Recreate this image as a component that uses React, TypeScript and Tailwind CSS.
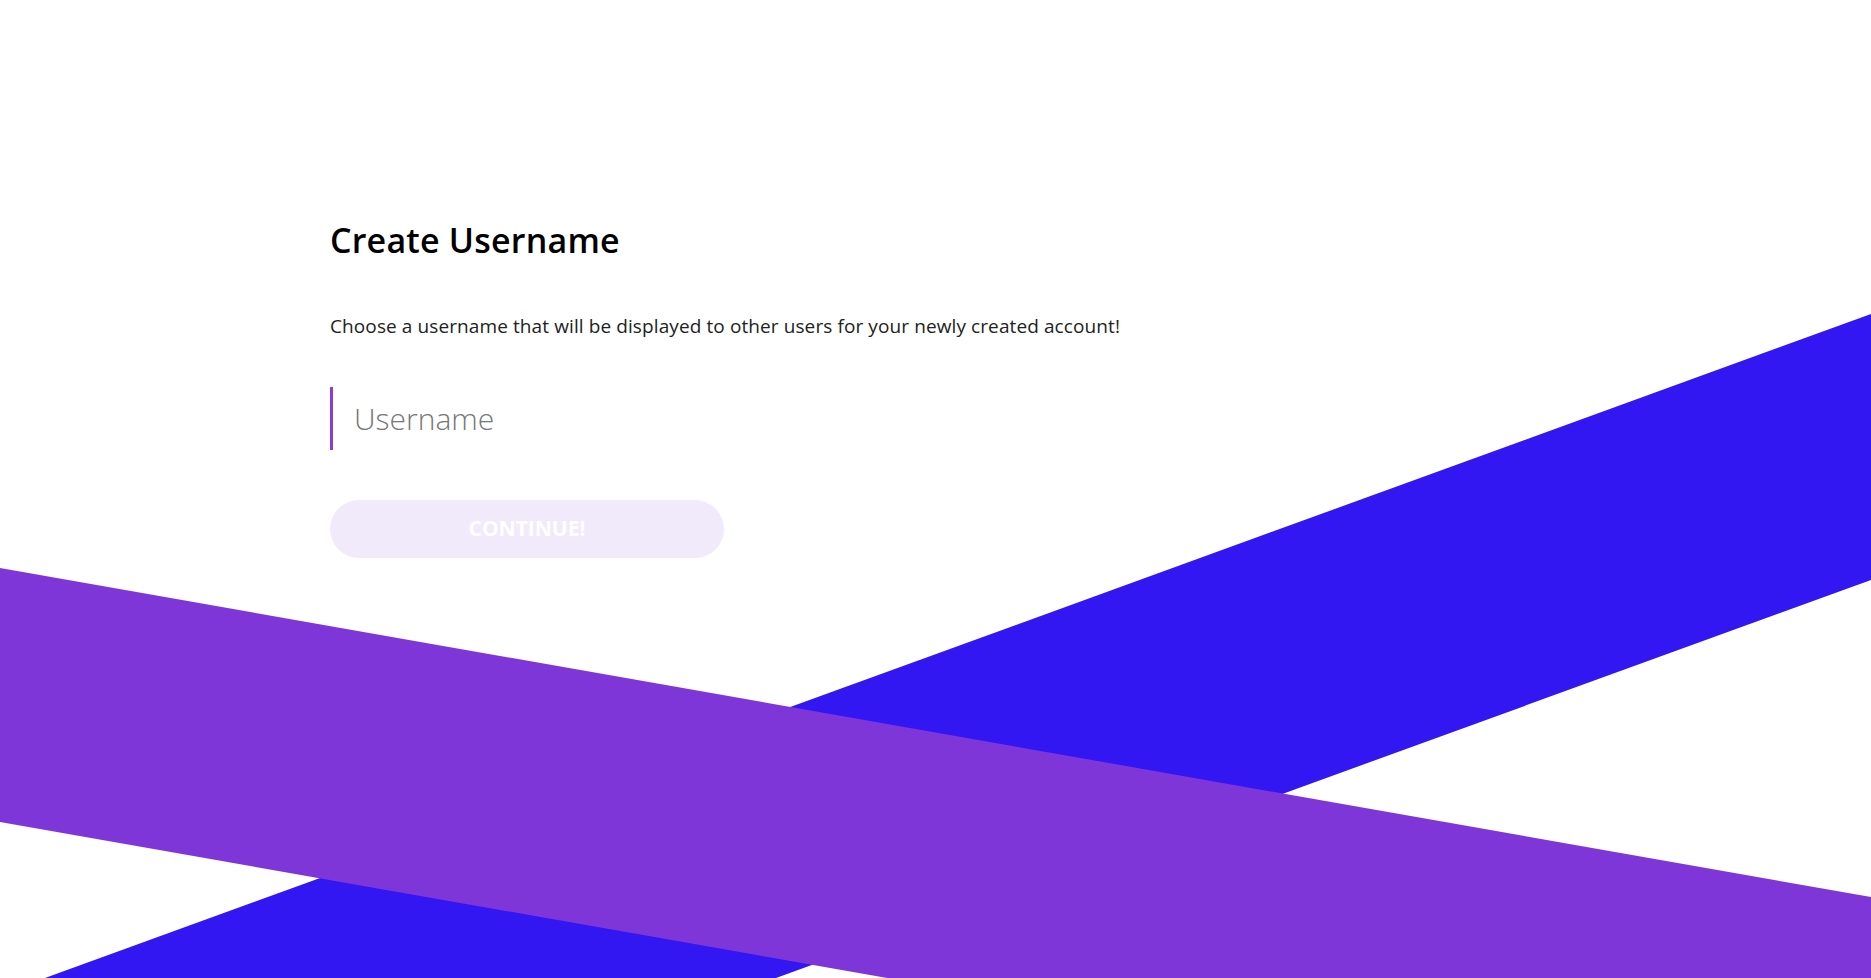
import React, { useState } from "react";

function Stripes() {
    return (
        <svg
            className="absolute inset-0 w-full h-full pointer-events-none"
            viewBox="0 0 1871 978"
            preserveAspectRatio="none"
        >
            <polygon points="1871,314 1871,580 776,978 45,978" fill="#3317f3" />
            <polygon points="0,568 1871,897 1871,1151 0,822" fill="#7f36d9" />
        </svg>
    );
}

export default function App() {
    const [username, setUsername] = useState("");

    return (
        <div className="relative min-h-screen h-[978px] w-full bg-white overflow-hidden font-['Open_Sans',sans-serif]">
            <Stripes />
            <div className="relative pl-[330px] pt-[216px]">
                <h1 className="text-[34px] leading-[48px] font-semibold text-black tracking-[0.2px]">Create Username</h1>
                <p className="mt-[48px] text-[19px] leading-[28px] text-[#222] tracking-[0.1px]">
                    Choose a username that will be displayed to other users for your newly created account!
                </p>
                <div className="mt-[47px] flex items-center h-[63px] border-l-[3px] border-[#8a3be0] pl-[21px]">
                    <input
                        value={username}
                        onChange={(e) => setUsername(e.target.value)}
                        placeholder="Username"
                        className="w-[500px] bg-transparent outline-none text-[30px] text-[#222] placeholder:text-[#777] font-light"
                    />
                </div>
                <button
                    disabled={!username}
                    className="mt-[50px] w-[394px] h-[58px] rounded-full bg-[#f1eafb] text-white text-[21px] font-bold"
                >
                    CONTINUE!
                </button>
            </div>
        </div>
    );
}
